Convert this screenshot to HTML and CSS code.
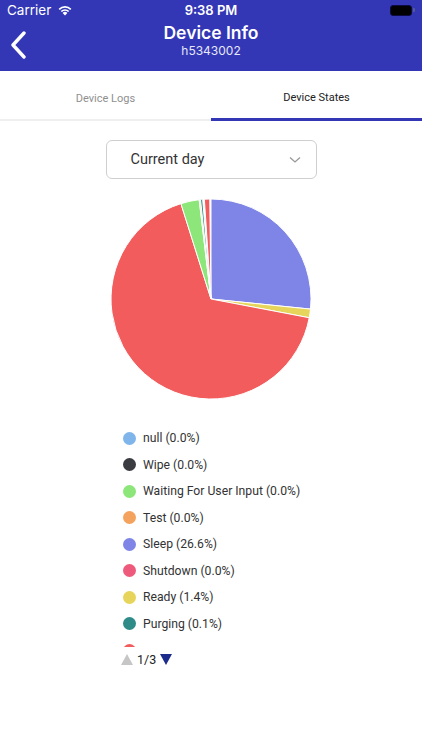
FILE: index.html
```html
<!DOCTYPE html>
<html>
<head>
<meta charset="utf-8">
<link rel="stylesheet" href="styles.css">
</head>
<body>
<div class="app">
  <header class="header">
    <div class="status">
      <div class="status-left">
        <span class="carrier">Carrier</span>
        <svg class="wifi" width="16" height="12" viewBox="0 0 16 12">
          <path d="M8 11.5 L5.6 8.9 A3.4 3.4 0 0 1 10.4 8.9 Z" fill="#fff"/>
          <path d="M3.7 6.9 A6.2 6.2 0 0 1 12.3 6.9 L11.1 8.1 A4.5 4.5 0 0 0 4.9 8.1 Z" fill="#fff"/>
          <path d="M1.6 4.7 A9.2 9.2 0 0 1 14.4 4.7 L13.2 5.9 A7.5 7.5 0 0 0 2.8 5.9 Z" fill="#fff"/>
        </svg>
      </div>
      <span class="time">9:38 PM</span>
      <div class="status-right">
        <div class="battery"><div class="battery-fill"></div></div>
        <div class="battery-cap"></div>
      </div>
    </div>
    <div class="nav">
      <svg class="back" width="18" height="28" viewBox="0 0 18 28">
        <path d="M15 2 L4 14 L15 26" fill="none" stroke="#fff" stroke-width="3.4" stroke-linecap="round" stroke-linejoin="round"/>
      </svg>
      <div class="titles">
        <div class="title">Device Info</div>
        <div class="subtitle">h5343002</div>
      </div>
    </div>
  </header>

  <nav class="tabs">
    <div class="tab">Device Logs</div>
    <div class="tab active">Device States</div>
  </nav>

  <main class="content">
    <div class="select">
      <span>Current day</span>
      <svg width="12" height="8" viewBox="0 0 12 8"><path d="M1 1.5 L6 6 L11 1.5" fill="none" stroke="#999" stroke-width="1.3"/></svg>
    </div>

    <svg class="pie" width="202" height="202" viewBox="-1 -1 202 202">
      <g stroke="#fff" stroke-width="1" stroke-linejoin="round">
        <path d="M100 100 L100 0 A100 100 0 0 1 199.49 110.11 Z" fill="#7e85e6"/>
        <path d="M100 100 L199.49 110.11 A100 100 0 0 1 198.23 118.74 Z" fill="#e6d55a"/>
        <path d="M100 100 L198.23 118.74 A100 100 0 1 1 69.93 4.63 Z" fill="#f25c5c"/>
        <path d="M100 100 L69.93 4.63 A100 100 0 0 1 88.16 0.70 Z" fill="#8de67a"/>
        <path d="M100 100 L88.16 0.70 A100 100 0 0 1 89.55 0.55 Z" fill="#f0e08a"/>
        <path d="M100 100 L89.55 0.55 A100 100 0 0 1 91.63 0.35 Z" fill="#2e8b84"/>
        <path d="M100 100 L93.37 0.22 A100 100 0 0 1 98.78 0.01 Z" fill="#f25c5c"/>
      </g>
    </svg>

    <div class="legend-wrap">
      <ul class="legend">
        <li><span class="dot c-null"></span>null (0.0%)</li>
        <li><span class="dot c-wipe"></span>Wipe (0.0%)</li>
        <li><span class="dot c-wait"></span>Waiting For User Input (0.0%)</li>
        <li><span class="dot c-test"></span>Test (0.0%)</li>
        <li><span class="dot c-sleep"></span>Sleep (26.6%)</li>
        <li><span class="dot c-shut"></span>Shutdown (0.0%)</li>
        <li><span class="dot c-ready"></span>Ready (1.4%)</li>
        <li><span class="dot c-purge"></span>Purging (0.1%)</li>
        <li><span class="dot c-off"></span></li>
      </ul>
    </div>

    <div class="pager">
      <svg width="12" height="11" viewBox="0 0 12 11"><path d="M6 0 L12 11 L0 11 Z" fill="#c6c6c6"/></svg>
      <span>1/3</span>
      <svg width="12" height="11" viewBox="0 0 12 11"><path d="M0 0 L12 0 L6 11 Z" fill="#1b2c8c"/></svg>
    </div>
  </main>
</div>
</body>
</html>
```

FILE: styles.css
```css
* { box-sizing: border-box; }
html, body { margin: 0; padding: 0; background: #fff; }
body { width: 422px; height: 750px; overflow: hidden; font-family: Roboto, "Liberation Sans", sans-serif; }

.header { background: #3337b5; color: #fff; height: 71px; display: flex; flex-direction: column; }
.status { height: 20px; display: flex; align-items: center; justify-content: space-between; padding: 0 7px; position: relative; font-family: Inter, "Liberation Sans", sans-serif; font-size: 13.5px; }
.status-left { display: flex; align-items: center; gap: 6px; width: 80px; }
.time { font-weight: 600; font-size: 13px; }
.status-right { width: 80px; display: flex; justify-content: flex-end; align-items: center; }
.battery { width: 22px; height: 11px; border: 1px solid #0c0c40; border-radius: 3px; padding: 1px; background: #000; }
.battery-fill { width: 100%; height: 100%; background: #000; border-radius: 1px; }
.battery-cap { width: 2px; height: 4px; background: #555a90; border-radius: 0 1px 1px 0; margin-left: 1px; }

.nav { flex: 1; display: flex; align-items: center; position: relative; }
.back { position: absolute; left: 9px; top: 11px; }
.titles { flex: 1; text-align: center; padding-bottom: 12px; }
.title { font-family: Inter, "Liberation Sans", sans-serif; font-weight: 600; font-size: 17.5px; line-height: 21px; }
.subtitle { font-family: Inter, "Liberation Sans", sans-serif; font-size: 12px; line-height: 15px; color: #e6e7f7; }

.tabs { display: flex; height: 50px; border-bottom: 2px solid #efefef; }
.tab { flex: 1; display: flex; align-items: center; justify-content: center; font-size: 11px; color: #8f8f8f; padding-top: 6px; }
.tab.active { color: #222; border-bottom: 3px solid #3337b5; margin-bottom: -2px; padding-top: 5px; }

.content { display: flex; flex-direction: column; align-items: center; }
.select { margin-top: 19px; width: 211px; height: 39px; border: 1px solid #cfcfcf; border-radius: 6px; display: flex; align-items: center; justify-content: space-between; padding: 0 15px 0 24px; font-size: 14.5px; color: #333; }
.select svg { margin-top: 1px; }

.pie { margin-top: 19px; display: block; }

.legend-wrap { align-self: stretch; height: 222px; overflow: hidden; margin-top: 25px; padding-left: 123px; }
.legend { list-style: none; margin: 0; padding: 0; }
.legend li { height: 26.5px; display: flex; align-items: center; font-size: 12.2px; color: #333; }
.dot { width: 13px; height: 13px; border-radius: 50%; margin-right: 7px; flex: none; }
.c-null { background: #7fb5ea; }
.c-wipe { background: #3b3c42; }
.c-wait { background: #8de67a; }
.c-test { background: #f4a35e; }
.c-sleep { background: #7e85e6; }
.c-shut { background: #ee5a7c; }
.c-ready { background: #e6d55a; }
.c-purge { background: #2e8b87; }
.c-off { background: #f25c5c; }

.pager { align-self: stretch; padding-left: 121px; display: flex; align-items: center; gap: 4px; height: 24px; font-size: 12.5px; color: #222; margin-top: 0; }
```
